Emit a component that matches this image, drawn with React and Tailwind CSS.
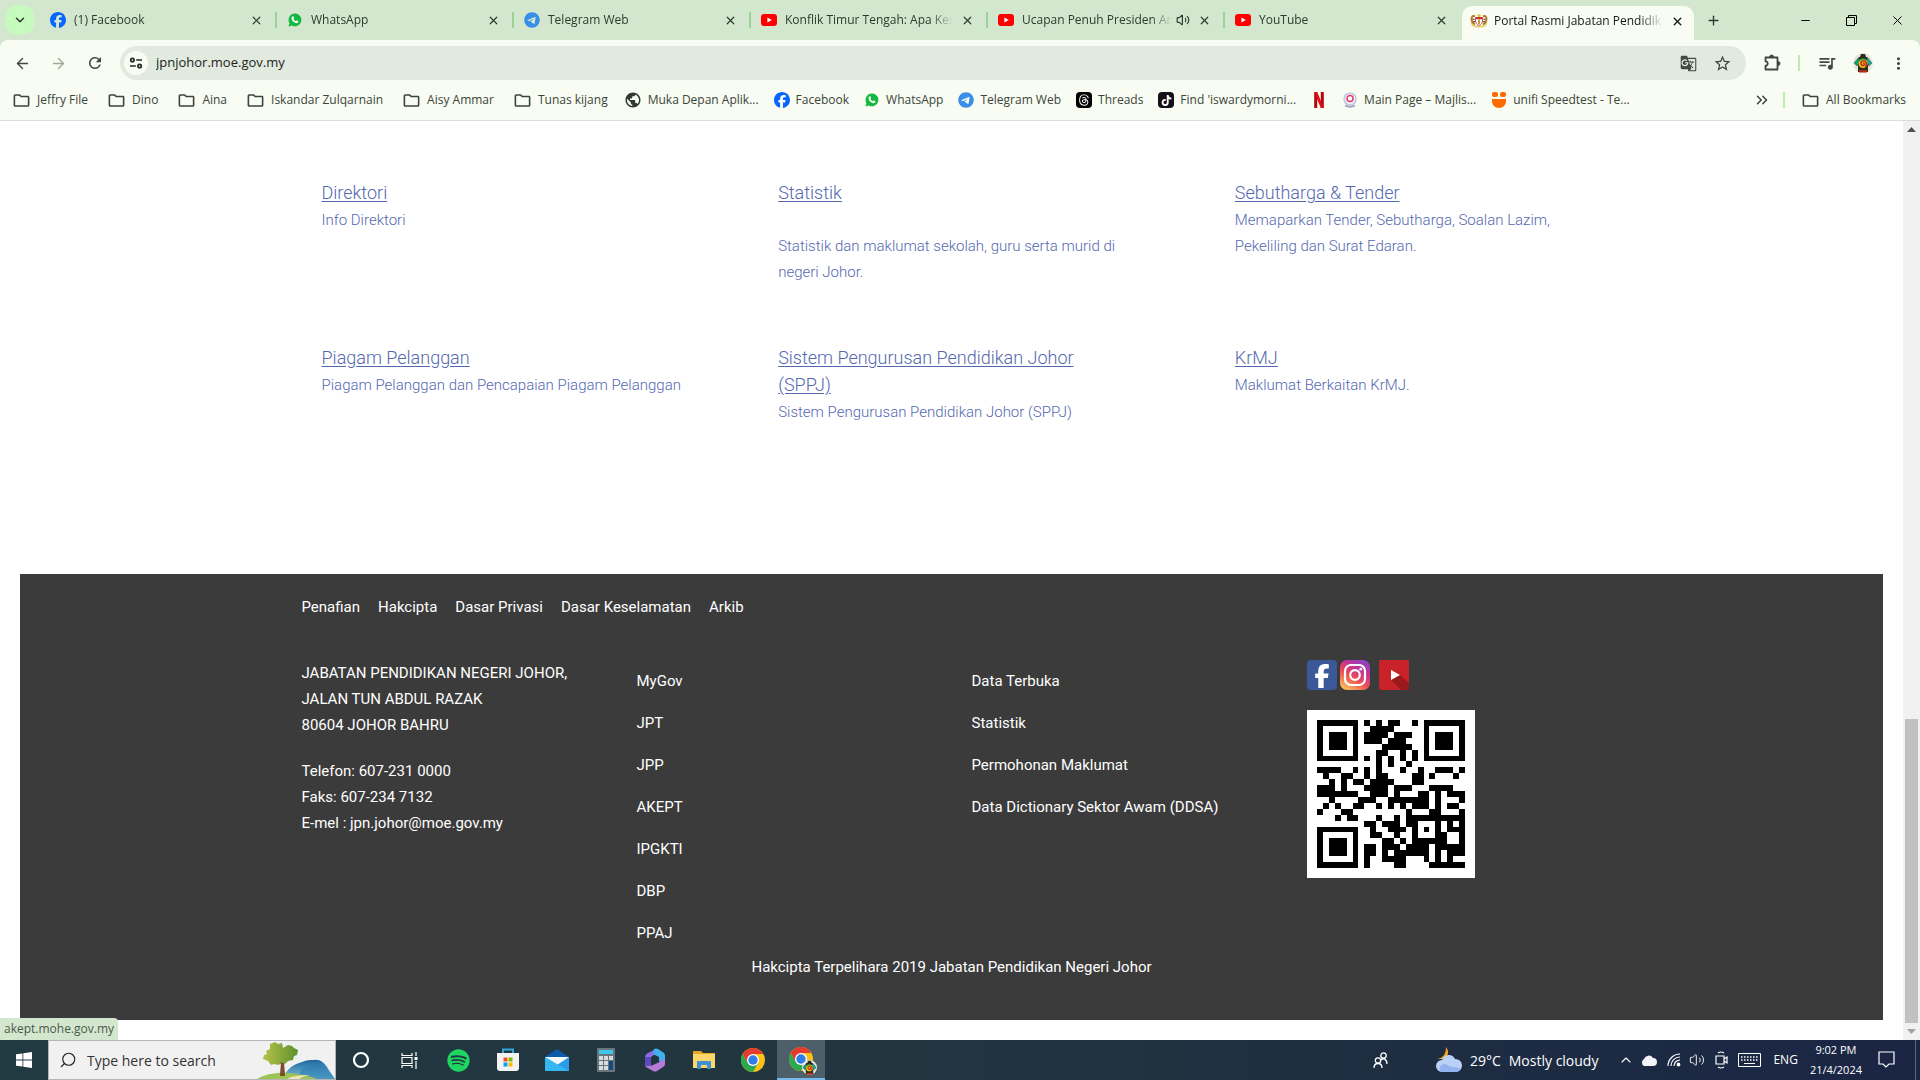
import React from 'react';
import { ArrowLeft, ArrowRight, ChevronDown, ChevronUp, ChevronsRight, Plus, X, Minus, Volume2, Search } from 'lucide-react';
import { MdRefresh, MdOutlineFolder, MdGTranslate, MdStarBorder, MdQueueMusic, MdMoreVert, MdPublic } from 'react-icons/md';
import { FaFacebook, FaTelegram, FaThreads, FaTiktok, FaSpotify, FaFacebookF } from 'react-icons/fa6';

const FacebookIcon = () => <FaFacebook size={16} className="text-[#0866ff]" />;
const TelegramIcon = () => <FaTelegram size={16} className="text-[#378fe9]" />;

const WhatsappIcon = () => (
  <svg width="16" height="16" viewBox="0 0 16 16">
    <path d="M8 1.500a6.400 6.400 0 1 1-3.100 12L1.500 14.500l1-3.300A6.400 6.400 0 0 1 8 1.500z" fill="#12b83f" />
    <path
      d="M5.300 4.500c.4-.4.9-.4 1.100 0l.6 1.300c.1.300 0 .5-.6 1.200.5 1 1.200 1.700 2.300 2.200.6-.7.8-.9 1.100-.8l1.400.7c.3.200.3.5.1 1-.3.800-1.300 1.200-2.100 1.100-2.300-.4-4.500-2.600-4.700-4.700 0-.8.400-1.600.8-2z"
      fill="#fff"
    />
  </svg>
);

const YoutubeIcon = () => (
  <svg width="16" height="12" viewBox="0 0 16 12">
    <rect width="16" height="12" rx="3" fill="#f00" />
    <path d="M6.4 3.4v5.2L10.8 6z" fill="#fff" />
  </svg>
);

const ThreadsIcon = () => (
  <span className="flex h-4 w-4 items-center justify-center rounded bg-black text-white">
    <FaThreads size={12} />
  </span>
);

const TiktokIcon = () => (
  <span className="flex h-4 w-4 items-center justify-center rounded bg-[#170f16] text-white">
    <FaTiktok size={11} />
  </span>
);

const NetflixIcon = () => (
  <svg width="16" height="16" viewBox="0 0 16 16">
    <path d="M3.2 0h3v16h-3zM9.8 0h3v16h-3z" fill="#b1060f" />
    <path d="M3.2 0h3l6.6 16h-3z" fill="#e50914" />
  </svg>
);

const CrestIcon = () => (
  <svg width="18" height="16" viewBox="0 0 18 16">
    <path d="M1.500 9c0 3 3 4.600 7.500 4.600S16.500 12 16.500 9" stroke="#e8cf6a" strokeWidth="1.800" fill="none" />
    <path d="M5 3.500C2.500 2 1 4.500 1.600 7c.4 2 1.600 3.600 3.400 4.500M13 3.500C15.500 2 17 4.500 16.400 7c-.4 2-1.600 3.600-3.400 4.500" stroke="#b5742a" strokeWidth="1.900" fill="none" />
    <path d="M2.500 6l2 .5M15.500 6l-2 .5M3 9l2-.5M15 9l-2-.5" stroke="#4a2c12" />
    <path d="M5.500 4.500h7v3.500c0 2-1.500 3.500-3.500 4.500-2-1-3.500-2.500-3.500-4.500z" fill="#fff" stroke="#a83030" strokeWidth=".8" />
    <path d="M5.500 4.500h7v1.700h-7z" fill="#d32020" />
    <path d="M8 6.500h2v4.500H8z" fill="#c99b32" />
    <path d="M7 1.500h4L10 4H8z" fill="#e8c22d" />
  </svg>
);

const MajlisIcon = () => (
  <svg width="16" height="16" viewBox="0 0 16 16">
    <circle cx="8" cy="7" r="6" fill="#f0ecf4" stroke="#b3bfdc" strokeWidth="1.2" />
    <circle cx="8" cy="6.500" r="3" fill="#fff" stroke="#d84467" strokeWidth="1.5" />
    <path d="M3 13.500q5 2.500 10 0" stroke="#a8a1c0" strokeWidth="1.8" fill="none" />
  </svg>
);

const UnifiIcon = () => (
  <svg width="16" height="16" viewBox="0 0 16 16">
    <rect x="1" y="0" width="6" height="5" rx="2" fill="#ff6a00" />
    <rect x="9" y="0" width="6" height="5" rx="2" fill="#ff6a00" />
    <path d="M1 7h14v2c0 4-3 7-7 7s-7-3-7-7z" fill="#ff6a00" />
  </svg>
);

const SiteInfoIcon = () => (
  <svg width="14" height="14" viewBox="0 0 14 14" fill="none" stroke="#1f2b20" strokeWidth="1.7">
    <circle cx="3.4" cy="4" r="1.7" />
    <path d="M7.2 4H13M1 10h5.8" />
    <circle cx="10.6" cy="10" r="1.7" />
  </svg>
);

const ExtensionIcon = () => (
  <svg width="18" height="18" viewBox="0 0 18 18" fill="none" stroke="#414941" strokeWidth="1.800" strokeLinejoin="round">
    <path d="M1.500 3.500h12v12h-12v-3.800a2.200 2.200 0 0 0 0-4.400z" />
    <path d="M5.600 3a2 2 0 0 1 4 0zM14 7.500a2 2 0 0 1 0 4z" fill="#414941" strokeWidth="1" />
  </svg>
);

const Avatar = ({ size = 20 }) => (
  <svg width={size} height={size} viewBox="0 0 20 20">
    <circle cx="10" cy="10" r="10" fill="#e8e4dc" />
    <path d="M8 1h4l1 3H7z" fill="#2b2b23" />
    <path d="M1 10l5-6h8l5 6-3 3-1-1v7H5v-7l-1 1z" fill="#26301a" />
    <path d="M1 10l4-5 2 3-3 5z" fill="#149a77" />
    <path d="M19 10l-4-5-2 3 3 5z" fill="#1ca08c" />
    <circle cx="10" cy="10.5" r="4.6" fill="#e6c417" />
    <path d="M10 10.5c1.6-1 2.2 1.6.4 2-2.6.4-3.6-3.4-.8-4.4 3.6-1 5.4 3.6 2.6 5.8" stroke="#c4241a" strokeWidth="1.4" fill="none" />
    <path d="M6 8c1-2 5-3 7-1" stroke="#2c8b34" strokeWidth="1.4" fill="none" />
    <path d="M6 17h8v2.5H6z" fill="#b52a17" />
  </svg>
);

const ChromeLogo = () => (
  <svg width="24" height="24" viewBox="0 0 24 24">
    <circle cx="12" cy="12" r="12" fill="#fbc116" />
    <path d="M12 6h10.4A12 12 0 0 0 1.6 6l5.2 9z" fill="#e33b2e" />
    <path d="M1.6 6A12 12 0 0 0 12 24l5.2-9L12 12 6.8 15z" fill="#2da94f" />
    <circle cx="12" cy="12" r="6" fill="#fff" />
    <circle cx="12" cy="12" r="4.7" fill="#2f7de9" />
  </svg>
);

const tabs = [
  { title: '(1) Facebook', icon: FacebookIcon },
  { title: 'WhatsApp', icon: WhatsappIcon },
  { title: 'Telegram Web', icon: TelegramIcon },
  { title: 'Konflik Timur Tengah: Apa Kes', icon: YoutubeIcon },
  { title: 'Ucapan Penuh Presiden An', icon: YoutubeIcon, audio: true },
  { title: 'YouTube', icon: YoutubeIcon },
];

const folders = ['Jeffry File', 'Dino', 'Aina', 'Iskandar Zulqarnain', 'Aisy Ammar', 'Tunas kijang'];

const bookmarks = [
  { label: 'Muka Depan Aplik...', icon: () => <MdPublic size={18} className="text-[#303a31]" /> },
  { label: 'Facebook', icon: FacebookIcon },
  { label: 'WhatsApp', icon: WhatsappIcon },
  { label: 'Telegram Web', icon: TelegramIcon },
  { label: 'Threads', icon: ThreadsIcon },
  { label: "Find 'iswardymorni...", icon: TiktokIcon },
  { label: '', icon: NetflixIcon },
  { label: 'Main Page – Majlis...', icon: MajlisIcon },
  { label: 'unifi Speedtest - Te...', icon: UnifiIcon },
];

const TabStrip = () => (
  <div className="flex h-10 items-center bg-[#d3e7cf] pl-1.5 text-[12px] text-[#2c3b2d]">
    <button aria-label="Search tabs" className="flex h-7 w-7 shrink-0 items-center justify-center rounded-[10px] bg-[#c5fcbe]">
      <ChevronDown size={14} strokeWidth={2.6} />
    </button>
    <div className="ml-1.5 flex min-w-0 flex-1 items-center">
      {tabs.map(({ title, icon: Icon, audio }, i) => (
        <div
          key={title}
          className={`flex h-4 w-[237px] items-center border-r-2 pl-2.5 pr-3 ${i === 5 ? 'border-transparent' : 'border-[#9bd295]'}`}
        >
          <Icon />
          <button className="ml-2 min-w-0 flex-1 overflow-hidden whitespace-nowrap text-left [mask-image:linear-gradient(to_right,#000_86%,transparent)]">
            {title}
          </button>
          {audio && <Volume2 size={14} className="ml-1" />}
          <button aria-label="Close tab" className="ml-2">
            <X size={13} strokeWidth={2.2} />
          </button>
        </div>
      ))}
      <div className="mt-1.5 flex h-[34px] w-[232px] items-center rounded-t-[10px] bg-[#f8fcf2] pb-1 pl-2 pr-2.5 text-[#161d16]">
        <CrestIcon />
        <button className="ml-1.5 min-w-0 flex-1 overflow-hidden whitespace-nowrap text-left [mask-image:linear-gradient(to_right,#000_86%,transparent)]">
          Portal Rasmi Jabatan Pendidik
        </button>
        <button aria-label="Close tab" className="ml-2">
          <X size={13} strokeWidth={2.6} />
        </button>
      </div>
      <button aria-label="New tab" className="ml-3">
        <Plus size={15} strokeWidth={2.2} />
      </button>
    </div>
    <div className="flex items-center text-black">
      <button aria-label="Minimize" className="flex w-[46px] justify-center">
        <Minus size={13} strokeWidth={1.8} />
      </button>
      <button aria-label="Restore" className="flex w-[46px] justify-center">
        <svg width="11" height="11" viewBox="0 0 11 11" fill="none" stroke="#000">
          <path d="M.5 2.5h8v8h-8zM2.5 2.5v-2h8v8h-2" />
        </svg>
      </button>
      <button aria-label="Close" className="flex w-[46px] justify-center">
        <X size={15} strokeWidth={1.6} />
      </button>
    </div>
  </div>
);

const Toolbar = () => (
  <div className="flex h-[46px] items-center rounded-t-lg bg-[#f8fcf2] pl-3.5 pr-3 text-[#414941]">
    <button aria-label="Back" className="w-9">
      <ArrowLeft size={17} />
    </button>
    <button aria-label="Forward" className="w-9 text-[#a2aaa0]">
      <ArrowRight size={17} />
    </button>
    <button aria-label="Reload" className="w-[34px]">
      <MdRefresh size={18} />
    </button>
    <div className="flex h-[34px] flex-1 items-center rounded-full bg-[#e2eadf] pl-1 pr-3.5">
      <button aria-label="View site information" className="flex h-6 w-6 items-center justify-center rounded-full bg-[#f8fcf2]">
        <SiteInfoIcon />
      </button>
      <input
        aria-label="Address"
        defaultValue="jpnjohor.moe.gov.my"
        className="ml-2 flex-1 bg-transparent text-[13px] text-[#1b231b] outline-none"
      />
      <button aria-label="Translate" className="mr-4">
        <MdGTranslate size={17} />
      </button>
      <button aria-label="Bookmark">
        <MdStarBorder size={19} />
      </button>
    </div>
    <button aria-label="Extensions" className="ml-[18px]">
      <ExtensionIcon />
    </button>
    <span className="ml-4 h-4 w-0.5 bg-[#b9edb2]" />
    <button aria-label="Media" className="ml-[17px]">
      <MdQueueMusic size={20} />
    </button>
    <button aria-label="Profile" className="ml-4">
      <Avatar />
    </button>
    <button aria-label="Menu" className="ml-4">
      <MdMoreVert size={19} />
    </button>
  </div>
);

const BookmarkBar = () => (
  <div className="flex h-[35px] items-center border-b border-[#d9dfd6] bg-[#f8fcf2] pb-1.5 pl-3 pr-3.5 text-[12px] text-[#3a443b]">
    <div className="flex gap-[19px]">
      {folders.map((label) => (
        <a key={label} href="#" className="flex items-center gap-1.5 whitespace-nowrap">
          <MdOutlineFolder size={19} />
          {label}
        </a>
      ))}
    </div>
    <div className="ml-4 flex flex-1 gap-[15px]">
      {bookmarks.map(({ label, icon: Icon }) => (
        <a key={label} href="#" aria-label={label || 'Netflix'} className="flex items-center gap-1.5 whitespace-nowrap">
          <Icon />
          {label}
        </a>
      ))}
    </div>
    <button aria-label="More bookmarks">
      <ChevronsRight size={18} />
    </button>
    <span className="ml-3 h-4 w-0.5 bg-[#b9edb2]" />
    <a href="#" className="ml-4 flex items-center gap-1.5 whitespace-nowrap">
      <MdOutlineFolder size={19} />
      All Bookmarks
    </a>
  </div>
);

const services = [
  { title: 'Direktori', text: 'Info Direktori' },
  { title: 'Statistik', text: 'Statistik dan maklumat sekolah, guru serta murid di negeri Johor.', spaced: true },
  { title: 'Sebutharga & Tender', text: 'Memaparkan Tender, Sebutharga, Soalan Lazim, Pekeliling dan Surat Edaran.' },
  { title: 'Piagam Pelanggan', text: 'Piagam Pelanggan dan Pencapaian Piagam Pelanggan' },
  { title: 'Sistem Pengurusan Pendidikan Johor (SPPJ)', text: 'Sistem Pengurusan Pendidikan Johor (SPPJ)' },
  { title: 'KrMJ', text: 'Maklumat Berkaitan KrMJ.' },
];

const policyLinks = ['Penafian', 'Hakcipta', 'Dasar Privasi', 'Dasar Keselamatan', 'Arkib'];
const agencyLinks = ['MyGov', 'JPT', 'JPP', 'AKEPT', 'IPGKTI', 'DBP', 'PPAJ'];
const dataLinks = ['Data Terbuka', 'Statistik', 'Permohonan Maklumat', 'Data Dictionary Sektor Awam (DDSA)'];

const qrRows = [
  '#######.#.#.##..#.#######',
  '#.....#..####.....#.....#',
  '#.###.#.####.###..#.###.#',
  '#.###.#.###.###...#.###.#',
  '#.###.#....#####..#.###.#',
  '#.....#...##..#.#.#.....#',
  '#######.#.#.#.#.#.#######',
  '..........#.#..#.........',
  '####..#.#.#...#..#..###.#',
  '.#..##..#.##....##.#...#.',
  '..#.#.##.####...##.......',
  '###.#...####.###...####..',
  '#######..###.#...##.#.###',
  '..#....###..#######.#...#',
  '.#.#..##..#.#.#.###.#.##.',
  '#...##.........#...##...#',
  '...#.##...#..#.##########',
  '........##.###.##...#.#.#',
  '#######..#..###.#.#.#.###',
  '#.....#..##..#..#...##..#',
  '#.###.#....##.#.######..#',
  '#.###.#.##.###.####.#####',
  '#.###.#.##.#.######.#.###',
  '#.....#.#..####...#.#.#..',
  '#######.#....##....######',
];

const QrCode = () => (
  <svg viewBox="0 0 25 25" className="h-[168px] w-[168px] bg-white p-2.5" shapeRendering="crispEdges" role="img" aria-label="QR">
    {qrRows.map((row, y) =>
      row.split('').map((cell, x) => (cell === '#' ? <rect key={`${x}-${y}`} x={x} y={y} width="1" height="1" /> : null))
    )}
  </svg>
);

const SocialLinks = () => (
  <div className="flex items-center">
    <a href="#" aria-label="Facebook" className="flex h-[30px] w-[30px] items-end justify-center rounded bg-[#3b5998] pb-0.5 text-white">
      <FaFacebookF size={24} />
    </a>
    <a href="#" aria-label="Instagram" className="ml-[3px]">
      <svg width="30" height="30" viewBox="0 0 30 30" fill="none">
        <defs>
          <linearGradient id="ig" x1="0.2" y1="1" x2="0.8" y2="0">
            <stop offset="0" stopColor="#fbc15c" />
            <stop offset="0.4" stopColor="#ee4d52" />
            <stop offset="0.7" stopColor="#c43297" />
            <stop offset="1" stopColor="#8a45c4" />
          </linearGradient>
        </defs>
        <rect width="30" height="30" rx="7" fill="url(#ig)" />
        <rect x="5" y="5" width="20" height="20" rx="6" stroke="#fff" strokeWidth="2.2" />
        <circle cx="15" cy="15" r="4.8" stroke="#fff" strokeWidth="2.2" />
        <circle cx="20.8" cy="9.2" r="1.4" fill="#fff" />
      </svg>
    </a>
    <a href="#" aria-label="YouTube" className="ml-[9px]">
      <svg width="30" height="30" viewBox="0 0 30 30">
        <rect width="30" height="30" rx="2" fill="#c92228" />
        <path d="M12 20l9-5 9 8v5a2 2 0 0 1-2 2h-6z" fill="#99191d" />
        <path d="M12 10v10l9-5z" fill="#fff" />
      </svg>
    </a>
  </div>
);

const Page = () => (
  <main className="min-w-0 flex-1 bg-white px-5 pt-[58px] font-[Roboto,sans-serif]">
    <section className="mx-auto grid max-w-[1370px] grid-cols-3 font-light text-[#5468b0]">
      {services.map(({ title, text, spaced }) => (
        <div key={title} className="min-h-[165px] pl-[55px] pr-6">
          <h3 className="pr-8 text-[18px] leading-[27px]">
            <a href="#" className="underline underline-offset-2">
              {title}
            </a>
          </h3>
          <p className={`text-[15px] leading-[26px] ${spaced ? 'mt-[27px]' : 'mt-px'}`}>{text}</p>
        </div>
      ))}
    </section>

    <footer className="mt-[65px] bg-[#3b3b3b] text-[15px] text-white">
      <div className="mx-auto max-w-[1340px] pb-10 pt-5">
        <nav className="flex gap-[18px] px-5 leading-[26px]">
          {policyLinks.map((link) => (
            <a key={link} href="#">
              {link}
            </a>
          ))}
        </nav>
        <div className="mt-10 grid grid-cols-4 leading-[26px]">
          <address className="px-5 not-italic">
            <p>
              JABATAN PENDIDIKAN NEGERI JOHOR,
              <br />
              JALAN TUN ABDUL RAZAK
              <br />
              80604 JOHOR BAHRU
            </p>
            <p className="mt-5">
              Telefon: 607-231 0000
              <br />
              Faks: 607-234 7132
              <br />
              E-mel : jpn.johor@moe.gov.my
            </p>
          </address>
          {[agencyLinks, dataLinks].map((links) => (
            <ul key={links[0]} className="px-5 leading-[42px]">
              {links.map((link) => (
                <li key={link}>
                  <a href="#" className="whitespace-nowrap">
                    {link}
                  </a>
                </li>
              ))}
            </ul>
          ))}
          <div className="flex flex-col gap-5 px-5">
            <SocialLinks />
            <QrCode />
          </div>
        </div>
        <p className="text-center leading-[26px]">Hakcipta Terpelihara 2019 Jabatan Pendidikan Negeri Johor</p>
      </div>
    </footer>
  </main>
);

const Scrollbar = () => (
  <div className="flex w-[17px] flex-col items-center justify-between bg-[#f1f1f1] py-1.5">
    <svg width="9" height="5" viewBox="0 0 9 5">
      <path d="M0 5h9L4.5 0z" fill="#505050" />
    </svg>
    <div className="mt-auto mb-1.5 h-[304px] w-[13px] bg-[#c1c1c1]" />
    <svg width="9" height="5" viewBox="0 0 9 5">
      <path d="M0 0h9L4.5 5z" fill="#a3a3a3" />
    </svg>
  </div>
);

const SearchArt = () => (
  <svg width="78" height="38" viewBox="0 0 78 38" className="shrink-0">
    <defs>
      <linearGradient id="hill" x1="0" y1="0" x2="0" y2="1">
        <stop offset="0" stopColor="#1c679f" />
        <stop offset="1" stopColor="#7fc0dc" />
      </linearGradient>
      <linearGradient id="leaf" x1="0" y1="0" x2="1" y2="0">
        <stop offset="0" stopColor="#b3c44a" />
        <stop offset="1" stopColor="#5f8f2c" />
      </linearGradient>
    </defs>
    <path d="M28 33c5-8 11-10 17-12 5-2 8-2 12-2 6-1 10 3 13 7 3 5 6 8 8 12H28z" fill="url(#hill)" />
    <path d="M44 29c7-5 14-7 21-5 5 3 9 9 13 14H40z" fill="#2c7db0" opacity=".6" />
    <path d="M0 38c8-5 20-7 32-6 10 1 22 3 28 6z" fill="#9cc455" />
    <path d="M30 38c4-3 14-4 22-4-4 1-8 2-9 4z" fill="#efe3b8" />
    <path d="M24 20h3l1 15h-5z" fill="#7d4a2c" />
    <path d="M16 15l9 8M34 14l-9 9" stroke="#7d4a2c" strokeWidth="1.6" />
    <path
      d="M13 3l5-2 3 2 4-1 1 5 5-3 4 1 2 2 4 2-1 5-3 1-1 4-5 1-3 3-4-2-2 3-5-1-3 1-3-4-5-2 1-4 3-1-1-3 4-2z"
      fill="url(#leaf)"
    />
  </svg>
);

const taskbarApps = [
  {
    name: 'Cortana',
    icon: (
      <svg width="18" height="18" viewBox="0 0 18 18">
        <circle cx="9" cy="9" r="7" fill="none" stroke="#fff" strokeWidth="2.2" />
      </svg>
    ),
  },
  {
    name: 'Task View',
    icon: (
      <svg width="17" height="17" viewBox="0 0 17 17" fill="none" stroke="#fff" strokeWidth="1.2">
        <path d="M1 1v2.5h10V1M1 16v-2.5h10V16M1 5.5h10v6H1zM15 0v4M15 9v8" />
        <path d="M13.5 5h3v3h-3z" fill="#fff" stroke="none" />
      </svg>
    ),
  },
  { name: 'Spotify', icon: <FaSpotify size={23} className="text-[#1ed760]" /> },
  {
    name: 'Microsoft Store',
    icon: (
      <svg width="24" height="24" viewBox="0 0 24 24">
        <path d="M7 6V1.500h10V6" fill="none" stroke="#2fa8e0" strokeWidth="2" />
        <path d="M1 5h22v15a3 3 0 0 1-3 3H4a3 3 0 0 1-3-3z" fill="#f3f3f3" />
        <path d="M7.500 9.500h4v4h-4z" fill="#f25022" />
        <path d="M12.500 9.500h4v4h-4z" fill="#7fba00" />
        <path d="M7.500 14.500h4v4h-4z" fill="#00a4ef" />
        <path d="M12.500 14.500h4v4h-4z" fill="#ffb900" />
      </svg>
    ),
  },
  {
    name: 'Mail',
    icon: (
      <svg width="24" height="23" viewBox="0 0 24 23">
        <path d="M0 8l12-8 12 8v3H0z" fill="#0d5cab" />
        <path d="M0 8h24v14H0z" fill="#2a9ce8" />
        <path d="M0 8h24L12 16z" fill="#f5f8fb" />
        <path d="M0 8l24 14H0z" fill="#35b8f1" />
      </svg>
    ),
  },
  {
    name: 'Calculator',
    icon: (
      <svg width="18" height="24" viewBox="0 0 18 24">
        <rect width="18" height="24" rx="1" fill="#69757c" />
        <path d="M2 2h14v4H2z" fill="#3fc7ea" />
        <path d="M2 8h4v4H2zM7 8h4v4H7zM12 8h4v4h-4zM2 13h4v4H2zM7 13h4v4H7zM2 18h4v4H2zM7 18h4v4H7z" fill="#d6dbde" />
        <path d="M12 13h4v9h-4z" fill="#164a83" />
      </svg>
    ),
  },
  {
    name: 'Microsoft 365',
    icon: (
      <svg width="22" height="24" viewBox="0 0 22 24">
        <path d="M12 1L3 5.500Q1 7 1 9v7l6 2V9l7-5z" fill="#8c6be8" />
        <path d="M10 1q2-1 4 0l6 4q1 1 1 3v8l-6-3V9L9 6z" fill="#41b0ec" />
        <path d="M21 11v5q0 2-2 3l-6 4q-2 1-4 0l-7-4q-1-1-1-3l6 2 8-4z" fill="#b77ad6" />
        <path d="M1 9v7q0 2 3 2 3 0 3-3V9z" fill="#5a4bbd" />
        <path d="M7 10l4-2 4 2v4l-4 2-4-2z" fill="#22363f" />
      </svg>
    ),
  },
  {
    name: 'File Explorer',
    icon: (
      <svg width="22" height="19" viewBox="0 0 22 19">
        <path d="M0 0h8l2 2h12v15H0z" fill="#e9a521" />
        <path d="M0 3h22v14H0z" fill="#fbd66d" />
        <path d="M4 10h14v8h-4v-4H8v4H4z" fill="#3e8fd3" />
      </svg>
    ),
  },
  { name: 'Google Chrome', icon: <ChromeLogo /> },
];

const Taskbar = () => (
  <div className="flex h-10 shrink-0 items-center bg-gradient-to-r from-[#213a42] via-[#22343f] to-[#1a2544] text-white">
    <button aria-label="Start" className="flex h-10 w-12 items-center justify-center">
      <svg width="16" height="16" viewBox="0 0 16 16" fill="#fff">
        <path d="M0 2.300L6.500 1.400v6.200H0zM7.300 1.300L16 0v7.600H7.300zM0 8.400h6.500v6.200L0 13.700zM7.300 8.400H16V16l-8.700-1.300z" />
      </svg>
    </button>
    <div className="flex h-10 w-72 items-center border border-[#b5b5b5] bg-[#f1f1f1] pl-2.5 text-[#222]">
      <Search size={18} strokeWidth={1.5} className="shrink-0 -scale-x-100" />
      <input aria-label="Search" placeholder="Type here to search" className="ml-2.5 min-w-0 flex-1 bg-transparent text-[14px] placeholder:text-[#333]" />
      <SearchArt />
    </div>
    {taskbarApps.map(({ name, icon }) => (
      <button key={name} aria-label={name} className="flex h-10 w-[49px] items-center justify-center">
        {icon}
      </button>
    ))}
    <button aria-label="Google Chrome profile" className="flex h-10 w-12 items-center justify-center border-b-2 border-[#76b9ed] bg-[#4d5f69]">
      <span className="relative">
        <ChromeLogo />
        <span className="absolute -bottom-1 -right-1">
          <Avatar size={15} />
        </span>
      </span>
    </button>

    <div className="ml-auto flex items-center">
      <svg width="15" height="17" viewBox="0 0 15 17" fill="none" stroke="#fff" strokeWidth="1.3">
        <circle cx="10.500" cy="3.500" r="2.700" />
        <circle cx="5" cy="8.500" r="2.700" />
        <path d="M1 16c0-6 8-6 8 0M8 8c3-3 6 0 6 4" />
      </svg>
      <button className="ml-12 flex items-center text-[14px]">
        <svg width="26" height="26" viewBox="0 0 26 26" className="mr-2">
          <path d="M10 0c4 5 2 11-4 12H1c7-1 9-6 9-12z" fill="#f5a623" />
          <path d="M6 25a6 6 0 0 1 0-12 7 7 0 0 1 13-1 6.500 6.500 0 0 1 1 13z" fill="#b9d0f7" />
          <path d="M4 24a5 5 0 0 1 4-7c4 0 5 3 9 3s6 1 7 2-2 3-4 3H6z" fill="#94b3ee" />
        </svg>
        <span>29°C</span>
        <span className="ml-2">Mostly cloudy</span>
      </button>
      <ChevronUp size={16} strokeWidth={1.6} className="ml-5" />
      <svg width="17" height="11" viewBox="0 0 17 11" className="ml-1.5">
        <path d="M4 11a4 4 0 0 1 0-7 5 5 0 0 1 9-1 4 4 0 0 1 0 8z" fill="#f2f4f7" />
      </svg>
      <svg width="14" height="14" viewBox="0 0 14 14" fill="none" stroke="#fff" strokeWidth="1.200" className="ml-2.5">
        <path d="M1 13A12 12 0 0 1 13 1M4 13a9 9 0 0 1 9-9M7 13a6 6 0 0 1 6-6" />
        <circle cx="11.500" cy="11.500" r="1.300" fill="#fff" />
      </svg>
      <Volume2 size={16} strokeWidth={1.4} className="ml-2" />
      <svg width="13" height="18" viewBox="0 0 13 18" fill="none" stroke="#fff" strokeWidth="1.200" className="ml-2.5">
        <path d="M1 5h8v8H1zM9 8l3-2v6l-3-2M3 2q3-2 6 0M3 16q3 2 6 0" />
      </svg>
      <svg width="23" height="14" viewBox="0 0 23 14" fill="none" stroke="#fff" className="ml-2.5">
        <path d="M.5.5h22v13H.5z" />
        <path d="M3 4h17M3 7h17" strokeDasharray="1.500 1.500" strokeWidth="1.500" />
        <path d="M6 10.500h11" />
      </svg>
      <span className="ml-3 text-[12px]">ENG</span>
      <div className="ml-3 text-center text-[11px] leading-5">
        <p>9:02 PM</p>
        <p>21/4/2024</p>
      </div>
      <svg width="17" height="18" viewBox="0 0 17 18" fill="none" stroke="#fff" strokeWidth="1.200" className="ml-4 mr-5">
        <path d="M1 1h15v12h-5l-3 3-3-3H1z" />
      </svg>
      <span className="mr-1 h-10 w-px bg-[#5d6880]" />
    </div>
  </div>
);

export default function App() {
  return (
    <div className="flex min-h-screen flex-col font-['Open_Sans',sans-serif]">
      <div className="bg-[#d3e7cf]">
        <TabStrip />
        <Toolbar />
        <BookmarkBar />
      </div>
      <div className="relative flex flex-1">
        <Page />
        <Scrollbar />
        <div className="absolute bottom-0 left-0 rounded-tr bg-[#d3e7cf] px-1 text-[12px] leading-[22px] text-[#4a5a4b]">
          akept.mohe.gov.my
        </div>
      </div>
      <Taskbar />
    </div>
  );
}
